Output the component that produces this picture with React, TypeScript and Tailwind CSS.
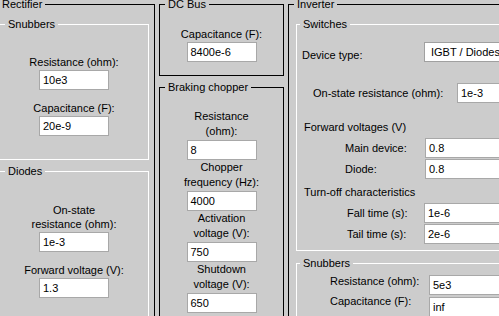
import type { ReactNode } from 'react'

// single edit box, MATLAB style
function Box({ value, className }: { value: string; className: string }) {
  return (
    <div className={`h-[20px] shrink-0 bg-white border border-[#a8a8a8] pl-[3px] flex items-center whitespace-nowrap ${className}`}>
      {value}
    </div>
  )
}

function Title({ text, className }: { text: string; className: string }) {
  return (
    <span className={`absolute top-[-5px] px-[3px] bg-[#cccccc] leading-[8px] whitespace-nowrap ${className}`}>
      {text}
    </span>
  )
}

// centered label above a box
function Field({ label, value, className = '', tall = false }: { label: ReactNode; value: string; className?: string; tall?: boolean }) {
  return (
    <div className={className}>
      <div className={tall ? 'text-center leading-[15px]' : 'text-center leading-[14px]'}>{label}</div>
      <Box value={value} className="mx-auto mt-[1px] w-[70px]" />
    </div>
  )
}

function Row({ label, value, labelClass, boxClass = 'w-[100px]' }: { label: string; value: string; labelClass: string; boxClass?: string }) {
  return (
    <div className="flex items-center h-[20px]">
      <span className={`shrink-0 whitespace-nowrap ${labelClass}`}>{label}</span>
      <Box value={value} className={boxClass} />
    </div>
  )
}

export default function App() {
  return (
    <div className="w-[499px] h-[316px] overflow-hidden bg-[#cccccc] text-[11px] leading-[14px] text-black font-['Liberation_Sans',Arial,sans-serif]">
      <div className="flex items-start ml-[-3px] pt-[4px]">
        {/* Rectifier */}
        <div className="relative w-[158px] h-[330px] shrink-0 border border-black">
          <Title text="Rectifier" className="left-[1px]" />

          <div className="relative ml-[1px] mt-[19px] w-[150px] h-[136px] border border-white pt-[30px]">
            <Title text="Snubbers" className="left-[5px]" />
            <Field label="Resistance (ohm):" value="10e3" />
            <Field label="Capacitance (F):" value="20e-9" className="mt-[11px]" />
          </div>

          <div className="relative ml-[1px] mt-[11px] w-[150px] h-[200px] border border-white pt-[31px]">
            <Title text="Diodes" className="left-[5px]" />
            <Field label={<>On-state<br />resistance (ohm):</>} value="1e-3" />
            <Field label="Forward voltage (V):" value="1.3" className="mt-[11px]" />
          </div>
        </div>

        {/* DC bus + chopper */}
        <div className="ml-[4px] w-[125px] shrink-0 flex flex-col">
          <div className="relative h-[72px] border border-black pt-[22px]">
            <Title text="DC Bus" className="left-[5px]" />
            <Field label="Capacitance (F):" value="8400e-6" />
          </div>
          <div className="relative mt-[11px] h-[260px] border border-black pt-[21px]">
            <Title text="Braking chopper" className="left-[5px]" />
            <Field tall label={<>Resistance<br />(ohm):</>} value="8" />
            <Field tall label={<>Chopper<br />frequency (Hz):</>} value="4000" />
            <Field tall label={<>Activation<br />voltage (V):</>} value="750" />
            <Field tall label={<>Shutdown<br />voltage (V):</>} value="650" />
          </div>
        </div>

        {/* Inverter */}
        <div className="relative ml-[4px] w-[240px] h-[330px] shrink-0 border border-black pl-[7px]">
          <Title text="Inverter" className="left-[5px]" />

          <div className="relative mt-[19px] w-[230px] h-[227px] border border-white pt-[17px]">
            <Title text="Switches" className="left-[3px]" />
            <div className="flex items-center h-[20px]">
              <span className="shrink-0 w-[127px] pl-[5px] mt-[6px]">Device type:</span>
              <div className="h-[20px] w-[100px] shrink-0 bg-white border border-[#a0a0a0] pl-[6px] flex items-center whitespace-nowrap">
                IGBT / Diodes
              </div>
            </div>
            <div className="mt-[21px]">
              <Row label="On-state resistance (ohm):" value="1e-3" labelClass="w-[160px] pl-[16px]" />
            </div>
            <div className="mt-[17px] pl-[7px]">Forward voltages (V)</div>
            <div className="mt-[4px]">
              <Row label="Main device:" value="0.8" labelClass="w-[128px] pl-[48px]" />
            </div>
            <div className="mt-[1px]">
              <Row label="Diode:" value="0.8" labelClass="w-[128px] pl-[48px]" />
            </div>
            <div className="mt-[6px] pl-[7px]">Turn-off characteristics</div>
            <div className="mt-[4px]">
              <Row label="Fall time (s):" value="1e-6" labelClass="w-[127px] pl-[50px]" />
            </div>
            <div className="mt-[1px]">
              <Row label="Tail time (s):" value="2e-6" labelClass="w-[127px] pl-[50px]" />
            </div>
          </div>

          <div className="relative mt-[12px] w-[230px] h-[80px] border border-white pt-[11px]">
            <Title text="Snubbers" className="left-[3px]" />
            <div className="flex items-start">
              <span className="shrink-0 w-[132px] pl-[33px] mt-[-1px]">Resistance (ohm):</span>
              <Box value="5e3" className="w-[90px]" />
            </div>
            <div className="flex items-start mt-[2px]">
              <span className="shrink-0 w-[132px] pl-[33px] mt-[-3px]">Capacitance (F):</span>
              <Box value="inf" className="w-[90px]" />
            </div>
          </div>
        </div>
      </div>
    </div>
  )
}
